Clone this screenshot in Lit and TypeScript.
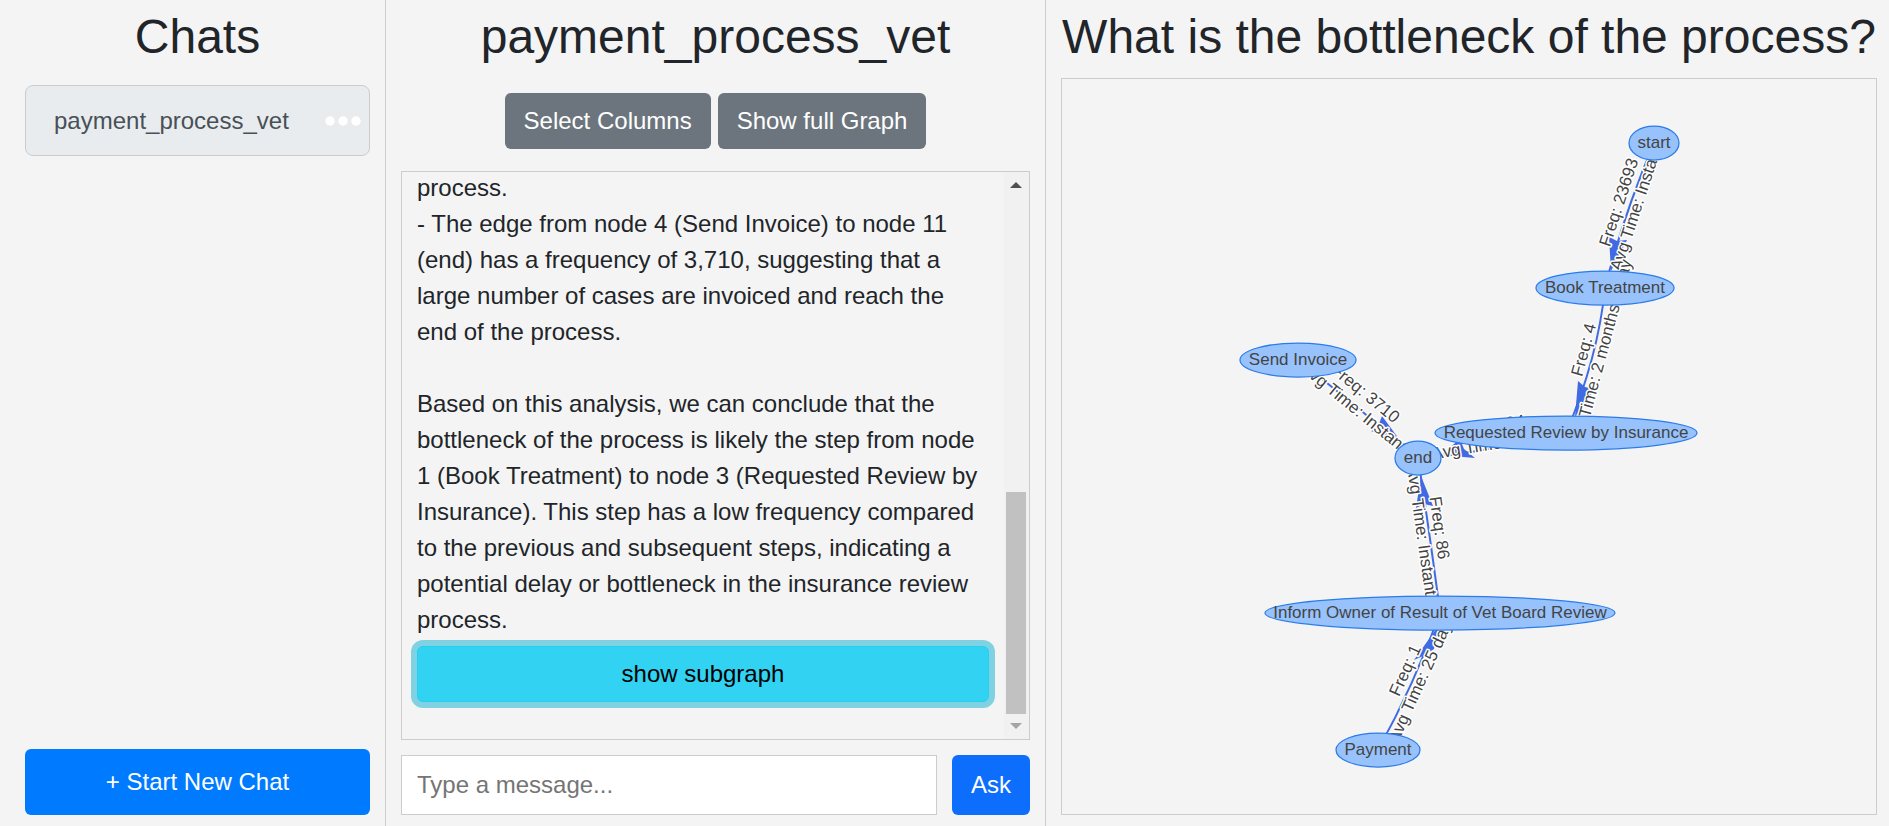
import { LitElement, html, svg, css } from "lit";
import { customElement, state } from "lit/decorators.js";

interface GraphNode {
  label: string;
  x: number;
  y: number;
  rx: number;
}

interface GraphEdge {
  path: string;
  arrow: string;
  x: number;
  y: number;
  angle: number;
  freq: string;
  time: string;
}

const NODES: GraphNode[] = [
  { label: "start", x: 592, y: 64, rx: 25 },
  { label: "Book Treatment", x: 543, y: 209, rx: 69 },
  { label: "Requested Review by Insurance", x: 504, y: 354, rx: 131 },
  { label: "Send Invoice", x: 236, y: 281, rx: 58 },
  { label: "end", x: 356, y: 379, rx: 23 },
  { label: "Inform Owner of Result of Vet Board Review", x: 378, y: 534, rx: 175 },
  { label: "Payment", x: 316, y: 671, rx: 42 },
];

const EDGES: GraphEdge[] = [
  {
    path: "M592 64 Q560 140 543 209",
    arrow: "549,192 547,158 555,162 565,161",
    x: 565, y: 126, angle: -71.8, freq: "Freq: 23693", time: "Avg Time: Instant",
  },
  {
    path: "M543 209 Q536 279 504 354",
    arrow: "513,338 516,302 523,308 533,310",
    x: 530, y: 273, angle: -74.9, freq: "Freq: 4", time: "Avg Time: 2 months 1 day",
  },
  {
    path: "M236 281 Q292 325 356 379",
    arrow: "340,364 320,337 317,345 309,352",
    x: 298, y: 321, angle: 39.3, freq: "Freq: 3710", time: "Avg Time: Instant",
  },
  {
    path: "M504 354 Q430 373 356 379",
    arrow: "379,376 398,360 402,370 413,379",
    x: 433, y: 355, angle: -9.3, freq: "Freq: 34", time: "Avg Time: Instant",
  },
  {
    path: "M378 534 Q370 470 356 379",
    arrow: "359,397 354,429 362,425 371,427",
    x: 369, y: 450, angle: 81.9, freq: "Freq: 86", time: "Avg Time: Instant",
  },
  {
    path: "M316 671 Q352 606 378 534",
    arrow: "377,546 352,581 361,577 372,570",
    x: 351, y: 595, angle: -65.5, freq: "Freq: 1", time: "Avg Time: 25 days",
  },
];

@customElement("process-graph")
export class ProcessGraph extends LitElement {
  static styles = css`
    :host {
      display: block;
      min-height: 0;
    }
    .canvas {
      display: block;
      width: 100%;
      height: 100%;
    }
    .edge {
      fill: none;
      stroke: #4169e1;
      stroke-width: 2;
    }
    .arrow {
      fill: #4169e1;
    }
    .label {
      font-family: "Liberation Sans", Arial, sans-serif;
      font-size: 17px;
      text-anchor: middle;
      fill: #444444;
    }
    .halo {
      stroke: #ffffff;
      stroke-width: 3;
      stroke-linejoin: round;
      paint-order: stroke;
    }
    .node {
      fill: #97c2fc;
      stroke: #2b7ce9;
      stroke-width: 1.25;
    }
  `;

  render() {
    return html`
      <svg class="canvas" viewBox="0 0 814 735" role="img" aria-label="Process graph">
        ${EDGES.map(
          (e) => svg`
            <path class="edge" d=${e.path}></path>
            <polygon class="arrow" points=${e.arrow}></polygon>
            <g transform="translate(${e.x} ${e.y}) rotate(${e.angle})">
              <text class="label halo" y="-3">${e.freq}</text>
              <text class="label halo" y="15">${e.time}</text>
            </g>`
        )}
        ${NODES.map(
          (n) => svg`
            <ellipse class="node" cx=${n.x} cy=${n.y} rx=${n.rx} ry="17"></ellipse>
            <text class="label" x=${n.x} y=${n.y + 5}>${n.label}</text>`
        )}
      </svg>
    `;
  }
}

@customElement("app-root")
export class AppRoot extends LitElement {
  @state() private draft = "";

  static styles = css`
    :host {
      display: grid;
      grid-template-columns: 386fr 660fr 843fr;
      height: 100vh;
      background: #f4f4f4;
      color: #212529;
      font-family: "Liberation Sans", Arial, sans-serif;
      font-size: 24px;
      line-height: 36px;
    }
    * {
      box-sizing: border-box;
    }
    .panel {
      display: flex;
      flex-direction: column;
      min-width: 0;
      min-height: 0;
      padding: 8px 15px 11px;
    }
    .panel + .panel {
      padding-right: 12px;
    }
    .panel.ruled {
      padding-right: 15px;
      border-right: 1px solid #cccccc;
    }
    .panel.side {
      padding-left: 25px;
    }
    h1 {
      margin: 0;
      font-size: 48px;
      line-height: 58px;
      font-weight: 400;
      text-align: center;
      white-space: nowrap;
    }
    button {
      font: inherit;
      border: 1px solid transparent;
      border-radius: 6px;
      padding: 9px 18px;
      cursor: pointer;
    }
    .chats {
      flex: 1;
      margin: 19px 0 0;
      padding: 0;
      list-style: none;
    }
    .chat {
      display: flex;
      align-items: center;
      justify-content: space-between;
      padding: 17px 8px 16px 28px;
      border: 1px solid #cccccc;
      border-radius: 8px;
      background: #e8ecef;
    }
    .chat-link {
      color: #495057;
      text-decoration: none;
    }
    .more {
      display: flex;
      padding: 0;
      border: 0;
      background: none;
    }
    .new-chat {
      padding: 14px;
      background: #007bff;
      color: #ffffff;
    }
    .tools {
      display: flex;
      justify-content: center;
      gap: 7px;
      margin: 27px 0 22px;
    }
    .tool {
      background: #6c757d;
      color: #ffffff;
    }
    .history {
      flex: 1;
      display: flex;
      min-height: 0;
      overflow: hidden;
      border: 1px solid #cccccc;
    }
    .messages {
      flex: 1;
      display: flex;
      flex-direction: column;
      justify-content: flex-end;
      min-width: 0;
      padding: 0 15px 37px;
    }
    .message {
      margin: 0;
      white-space: pre-line;
    }
    .subgraph {
      margin-top: 8px;
      border-color: #25cff2;
      background: #31d2f2;
      color: #000000;
      box-shadow: 0 0 0 6px #80d1e1;
    }
    .scrollbar {
      display: flex;
      flex-direction: column;
      align-items: stretch;
      width: 25px;
      padding: 10px 3px 10px 2px;
      background: #f1f1f1;
    }
    .up,
    .down {
      align-self: center;
      border: 6px solid transparent;
    }
    .up {
      border-top-width: 0;
      border-bottom-color: #505050;
    }
    .down {
      border-bottom-width: 0;
      border-top-color: #a3a3a3;
    }
    .rail {
      flex: 1;
      display: flex;
      flex-direction: column;
      justify-content: flex-end;
      padding: 9px 0;
    }
    .thumb {
      height: 43%;
      background: #c1c1c1;
    }
    .composer {
      display: flex;
      gap: 15px;
      margin-top: 15px;
    }
    .field {
      flex: 1;
      min-width: 0;
      padding: 11px 15px;
      border: 1px solid #cccccc;
      border-radius: 0;
      background: #ffffff;
      color: #212529;
      font: inherit;
    }
    .field::placeholder {
      color: #757575;
      opacity: 1;
    }
    .ask {
      padding: 11px 18px;
      background: #0d6efd;
      color: #ffffff;
    }
    .graph {
      flex: 1;
      margin-top: 12px;
      border: 1px solid #cccccc;
    }
  `;

  private onInput(event: Event) {
    this.draft = (event.target as HTMLInputElement).value;
  }

  private onSubmit(event: Event) {
    event.preventDefault();
    this.draft = "";
  }

  render() {
    return html`
      <nav class="panel ruled side">
        <h1>Chats</h1>
        <ul class="chats">
          <li class="chat">
            <a class="chat-link" href="#chat">payment_process_vet</a>
            <button class="more" aria-label="Chat options">
              <svg width="36" height="10" viewBox="0 0 36 10" fill="#ffffff">
                <circle cx="5" cy="5" r="4.7"></circle>
                <circle cx="18" cy="5" r="4.7"></circle>
                <circle cx="31" cy="5" r="4.7"></circle>
              </svg>
            </button>
          </li>
        </ul>
        <button class="new-chat">+ Start New Chat</button>
      </nav>

      <main class="panel ruled">
        <h1>payment_process_vet</h1>
        <div class="tools">
          <button class="tool">Select Columns</button>
          <button class="tool">Show full Graph</button>
        </div>
        <div class="history">
          <div class="messages">
            <p class="message">${"process.\n- The edge from node 4 (Send Invoice) to node 11 (end) has a frequency of 3,710, suggesting that a large number of cases are invoiced and reach the end of the process.\n\nBased on this analysis, we can conclude that the bottleneck of the process is likely the step from node 1 (Book Treatment) to node 3 (Requested Review by Insurance). This step has a low frequency compared to the previous and subsequent steps, indicating a potential delay or bottleneck in the insurance review process."}</p>
            <button class="subgraph">show subgraph</button>
          </div>
          <div class="scrollbar" aria-hidden="true">
            <span class="up"></span>
            <div class="rail"><div class="thumb"></div></div>
            <span class="down"></span>
          </div>
        </div>
        <form class="composer" @submit=${this.onSubmit}>
          <input
            class="field"
            type="text"
            aria-label="Message"
            placeholder="Type a message..."
            .value=${this.draft}
            @input=${this.onInput}
          />
          <button class="ask" type="submit">Ask</button>
        </form>
      </main>

      <section class="panel">
        <h1>What is the bottleneck of the process?</h1>
        <process-graph class="graph"></process-graph>
      </section>
    `;
  }
}
